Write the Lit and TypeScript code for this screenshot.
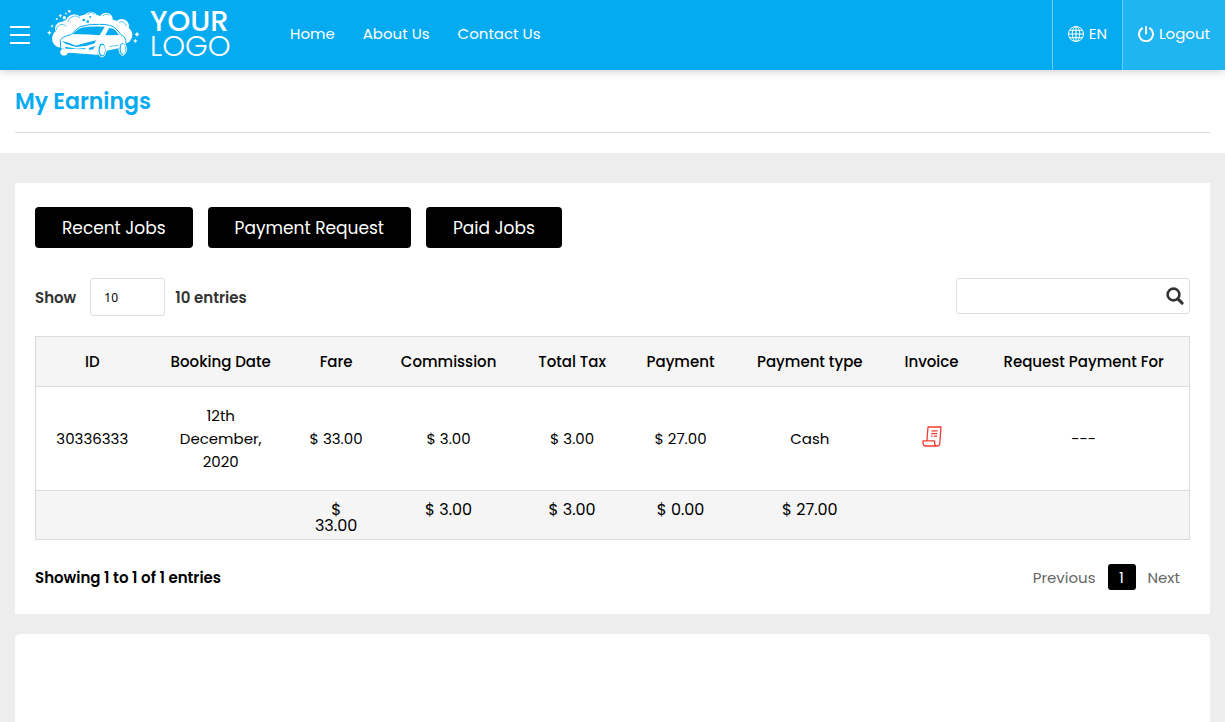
import { LitElement, html, css, svg } from "lit";
import { customElement, state } from "lit/decorators.js";

interface Job {
  id: string;
  date: string;
  amounts: string[];
  type: string;
  request: string;
}

const columns = [
  "ID", "Booking Date", "Fare", "Commission", "Total Tax",
  "Payment", "Payment type", "Invoice", "Request Payment For",
];

const jobs: Job[] = [
  {
    id: "30336333",
    date: "12th December, 2020",
    amounts: ["$ 33.00", "$ 3.00", "$ 3.00", "$ 27.00"],
    type: "Cash",
    request: "---",
  },
];

const totals = ["", "", "$ 33.00", "$ 3.00", "$ 3.00", "$ 0.00", "$ 27.00", "", ""];

const sparkle = (x: number, y: number, r: number) =>
  svg`<path fill="#fff" d="M${x} ${y - r}L${x + r / 3} ${y - r / 3}L${x + r} ${y}L${x + r / 3} ${y + r / 3}L${x} ${y + r}L${x - r / 3} ${y + r / 3}L${x - r} ${y}L${x - r / 3} ${y - r / 3}Z"/>`;

const carLogo = html`<svg class="car" viewBox="0 0 300 180" aria-hidden="true">
  <g fill="#fff">
    <circle cx="63" cy="104" r="27" />
    <circle cx="66" cy="74" r="21" />
    <circle cx="103" cy="58" r="27" />
    <circle cx="153" cy="42" r="19" />
    <circle cx="198" cy="46" r="20" />
    <circle cx="245" cy="67" r="22" />
    <circle cx="251" cy="93" r="26" />
    <path d="M70 50L150 27L235 52L262 110L60 130Z" />
  </g>
  <g fill="none" stroke="#05abf0" stroke-width="2">
    <path d="M49 78a17 17 0 0 1 30-11" />
    <path d="M84 54a22 22 0 0 1 36-13" />
    <path d="M143 33a11 11 0 0 1 21 0" />
    <path d="M189 36a12 12 0 0 1 20 0" />
    <path d="M237 56a14 14 0 0 1 22 11" />
  </g>
  <g fill="#05abf0">
    <circle cx="131" cy="48" r="4" /><circle cx="143" cy="53" r="4" /><circle cx="151" cy="39" r="3" />
  </g>
  <path fill="#fff" stroke="#05abf0" stroke-width="3" stroke-linejoin="round"
    d="M61 109Q65 98 93 92Q107 76 121 68Q146 60 178 61Q213 60 229 75L243 92Q259 99 258 119L256 130L199 142L171 154L75 147Q66 145 62 130Z" />
  <g fill="#05abf0">
    <path d="M97 91Q111 76 124 71Q150 66 194 68L179 94Q135 89 97 91Z" />
    <path d="M196 94L207 72Q219 72 226 79L237 93Z" />
    <path d="M64 110L85 116L108 125L124 120L168 109L164 118L141 125L108 129L78 120Z" />
    <path d="M75 128L110 134L139 132L133 136L77 134Z" />
    <path d="M146 132L166 126L159 136L148 137Z" />
    <path d="M68 133L80 138L76 142L68 140Z" />
  </g>
  <path d="M208 128L236 123" fill="none" stroke="#05abf0" stroke-width="2" />
  <ellipse cx="72" cy="145" rx="11" ry="10" fill="#fff" />
  <g fill="#05abf0" stroke="#fff" stroke-width="3">
    <ellipse cx="186" cy="138" rx="12" ry="21" />
    <ellipse cx="248" cy="135" rx="11" ry="19" />
  </g>
  <g fill="#fff">
    <ellipse cx="187" cy="138" rx="8" ry="16" /><ellipse cx="249" cy="135" rx="7" ry="15" />
    <circle cx="50" cy="45" r="3" /><circle cx="88" cy="22" r="4" /><circle cx="73" cy="41" r="5" />
  </g>
  ${sparkle(28, 86, 7)} ${sparkle(36, 66, 5)} ${sparkle(61, 35, 6)} ${sparkle(78, 29, 4)}
  ${sparkle(291, 91, 8)} ${sparkle(286, 111, 7)}
</svg>`;

const globeIcon = html`<svg class="icon" viewBox="0 0 16 16" aria-hidden="true">
  <g fill="none" stroke="currentColor">
    <circle cx="8" cy="8" r="7.5" /><ellipse cx="8" cy="8" rx="3.7" ry="7.5" />
    <path d="M8 .5v15M.5 8h15M1.6 4.3h12.8M1.6 11.7h12.8" />
  </g>
</svg>`;

const powerIcon = html`<svg class="icon" viewBox="0 0 16 16" aria-hidden="true">
  <g fill="none" stroke="currentColor" stroke-width="2" stroke-linecap="round">
    <path d="M4 2.4a7 7 0 1 0 8 0" /><path d="M8 1v6.5" />
  </g>
</svg>`;

const searchIcon = html`<svg class="glass" viewBox="0 0 18 18" aria-hidden="true">
  <circle cx="7.5" cy="7.5" r="5.9" fill="none" stroke="currentColor" stroke-width="2.6" />
  <path d="M11.9 11.9l4.2 4.2" stroke="currentColor" stroke-width="3" stroke-linecap="round" />
</svg>`;

const invoiceIcon = html`<svg class="scroll" viewBox="0 0 20 21" aria-hidden="true">
  <g fill="none" stroke="#f23c32" stroke-width="1.3" stroke-linejoin="round">
    <path d="M4.9 14.8L6 1h13l-1.2 16.2q-.3 2.8-2.6 2.8H3.7Q1.2 20 1 17v-2.2h11.6V17q.2 3 2.6 3" />
    <path d="M9.5 4.8h6M9.2 7.6h6M9 10.2h1.6M12 10.2h3" />
  </g>
</svg>`;

@customElement("app-root")
export class AppRoot extends LitElement {
  @state() private query = "";

  static styles = css`
    :host {
      display: block;
      min-height: 100vh;
      background: #ededed;
      color: #000;
      font: 15px/23px Poppins, Inter, sans-serif;
    }
    * { box-sizing: border-box; }
    a { color: inherit; text-decoration: none; }
    button, input, select { font: inherit; color: inherit; margin: 0; }
    button { cursor: pointer; border: 0; background: none; }
    .topbar {
      position: relative;
      display: flex;
      align-items: center;
      height: 70px;
      padding-left: 10px;
      background: #05abf0;
      color: #fff;
      box-shadow: 0 0 10px rgba(0, 0, 0, 0.25);
    }
    .menu { display: grid; gap: 6px; width: 20px; padding: 0; }
    .bar { height: 2px; background: #fff; }
    .brand { display: flex; align-items: center; gap: 10px; margin-left: 10px; padding-bottom: 2px; }
    .car { display: block; width: 100px; height: 60px; }
    .wordmark { width: 80px; font-size: 29px; line-height: 25px; white-space: nowrap; }
    .wordmark span { display: block; }
    .your { font-weight: 500; }
    .logo { font-weight: 300; }
    .nav { display: flex; gap: 28px; margin-left: 60px; padding-bottom: 4px; }
    .tools { display: flex; align-self: stretch; margin-left: auto; }
    .tool {
      display: flex;
      align-items: center;
      gap: 5px;
      padding: 0 15px 3px;
      border-left: 1px solid #69cdf6;
    }
    .logout { background: #1fb4f2; }
    .icon { width: 16px; height: 16px; }
    .heading { padding: 15px 15px 20px; background: #fff; }
    .title {
      margin: 0;
      padding-bottom: 14px;
      border-bottom: 1px solid #d8dadb;
      color: #05abf0;
      font-size: 22px;
      line-height: 33px;
      font-weight: 600;
    }
    .content { display: grid; gap: 20px; padding: 30px 15px 0; }
    .card { padding: 24px 20px; background: #fff; }
    .blank { height: 120px; border-radius: 5px; }
    .tabs { display: flex; gap: 15px; }
    .tab {
      height: 41px;
      padding: 1px 27px 0;
      border-radius: 4px;
      background: #000;
      color: #fff;
      font-size: 17px;
    }
    .controls {
      display: flex;
      align-items: center;
      justify-content: space-between;
      margin: 30px 0 20px;
      color: #333;
      font-weight: 600;
    }
    .length { display: flex; align-items: center; line-height: 21px; }
    .select {
      appearance: none;
      width: 75px;
      height: 38px;
      margin: 0 10px 0 14px;
      padding: 0 13px;
      border: 1px solid #ddd;
      border-radius: 3px;
      background: #fff;
      color: #000;
      font: 12px "Noto Sans", sans-serif;
    }
    .search {
      display: flex;
      align-items: center;
      width: 234px;
      height: 36px;
      margin-bottom: 2px;
      padding: 0 5px;
      border: 1px solid #ddd;
      border-radius: 3px;
    }
    .query { flex: 1; min-width: 0; border: 0; outline: 0; background: none; font-weight: 400; }
    .find { padding: 0; }
    .glass { display: block; width: 18px; height: 18px; }
    .grid {
      width: 100%;
      table-layout: fixed;
      border-collapse: collapse;
      border: 1px solid #dcdcdc;
      text-align: center;
    }
    .c-id { width: 9.8%; }
    .c-date { width: 12.5%; }
    .c-fare { width: 7.5%; }
    .c-commission { width: 12%; }
    .c-tax, .c-payment { width: 9.4%; }
    .c-type { width: 13%; }
    .c-invoice { width: 8.1%; }
    .head, .foot { background: #f5f5f5; }
    .head { border-bottom: 1px solid #dcdcdc; }
    .foot { border-top: 1px solid #dcdcdc; }
    .head th { height: 50px; padding: 0; font-weight: 500; white-space: nowrap; }
    .body td { height: 104px; padding: 0; }
    .body .date { padding: 0 28px; }
    .foot td { padding: 11px 18px 5px; font-size: 16px; line-height: 16px; vertical-align: top; }
    .scroll { display: block; width: 20px; height: 21px; margin: 0 auto 4px; }
    .summary {
      display: flex;
      align-items: center;
      justify-content: space-between;
      margin-top: 24px;
      font-weight: 600;
    }
    .pages { display: flex; align-items: center; gap: 12px; padding-right: 10px; font-weight: 400; }
    .page { padding: 0; color: #666; }
    .current { width: 28px; height: 26px; border-radius: 3px; background: #000; color: #fff; }
  `;

  render() {
    return html`
      <header class="topbar">
        <button class="menu" aria-label="Menu">
          <span class="bar"></span><span class="bar"></span><span class="bar"></span>
        </button>
        <a class="brand" href="#">
          ${carLogo}
          <span class="wordmark"><span class="your">YOUR</span><span class="logo">LOGO</span></span>
        </a>
        <nav class="nav">
          <a href="#">Home</a><a href="#">About Us</a><a href="#">Contact Us</a>
        </nav>
        <div class="tools">
          <a class="tool" href="#">${globeIcon}EN</a>
          <a class="tool logout" href="#">${powerIcon}Logout</a>
        </div>
      </header>
      <div class="heading"><h1 class="title">My Earnings</h1></div>
      <main class="content">
        <section class="card">
          <div class="tabs">
            <button class="tab">Recent Jobs</button>
            <button class="tab">Payment Request</button>
            <button class="tab">Paid Jobs</button>
          </div>
          <div class="controls">
            <div class="length">
              <label for="length">Show</label>
              <select class="select" id="length"><option>10</option><option>25</option><option>50</option></select>
              <span>10 entries</span>
            </div>
            <div class="search">
              <input class="query" type="text" aria-label="Search" .value=${this.query}
                @input=${(e: Event) => { this.query = (e.target as HTMLInputElement).value; }} />
              <button class="find" aria-label="Search">${searchIcon}</button>
            </div>
          </div>
          <table class="grid">
            <colgroup>
              <col class="c-id" /><col class="c-date" /><col class="c-fare" />
              <col class="c-commission" /><col class="c-tax" /><col class="c-payment" />
              <col class="c-type" /><col class="c-invoice" /><col />
            </colgroup>
            <thead class="head"><tr>${columns.map((c) => html`<th scope="col">${c}</th>`)}</tr></thead>
            <tbody class="body">
              ${jobs.map((job) => html`<tr>
                <td>${job.id}</td>
                <td class="date">${job.date}</td>
                ${job.amounts.map((a) => html`<td>${a}</td>`)}
                <td>${job.type}</td>
                <td><a href="#" aria-label="Invoice">${invoiceIcon}</a></td>
                <td>${job.request}</td>
              </tr>`)}
            </tbody>
            <tfoot class="foot"><tr>${totals.map((t) => html`<td>${t}</td>`)}</tr></tfoot>
          </table>
          <div class="summary">
            <span>Showing 1 to 1 of 1 entries</span>
            <nav class="pages" aria-label="Pages">
              <button class="page">Previous</button>
              <button class="page current">1</button>
              <button class="page">Next</button>
            </nav>
          </div>
        </section>
        <section class="card blank"></section>
      </main>
    `;
  }
}
